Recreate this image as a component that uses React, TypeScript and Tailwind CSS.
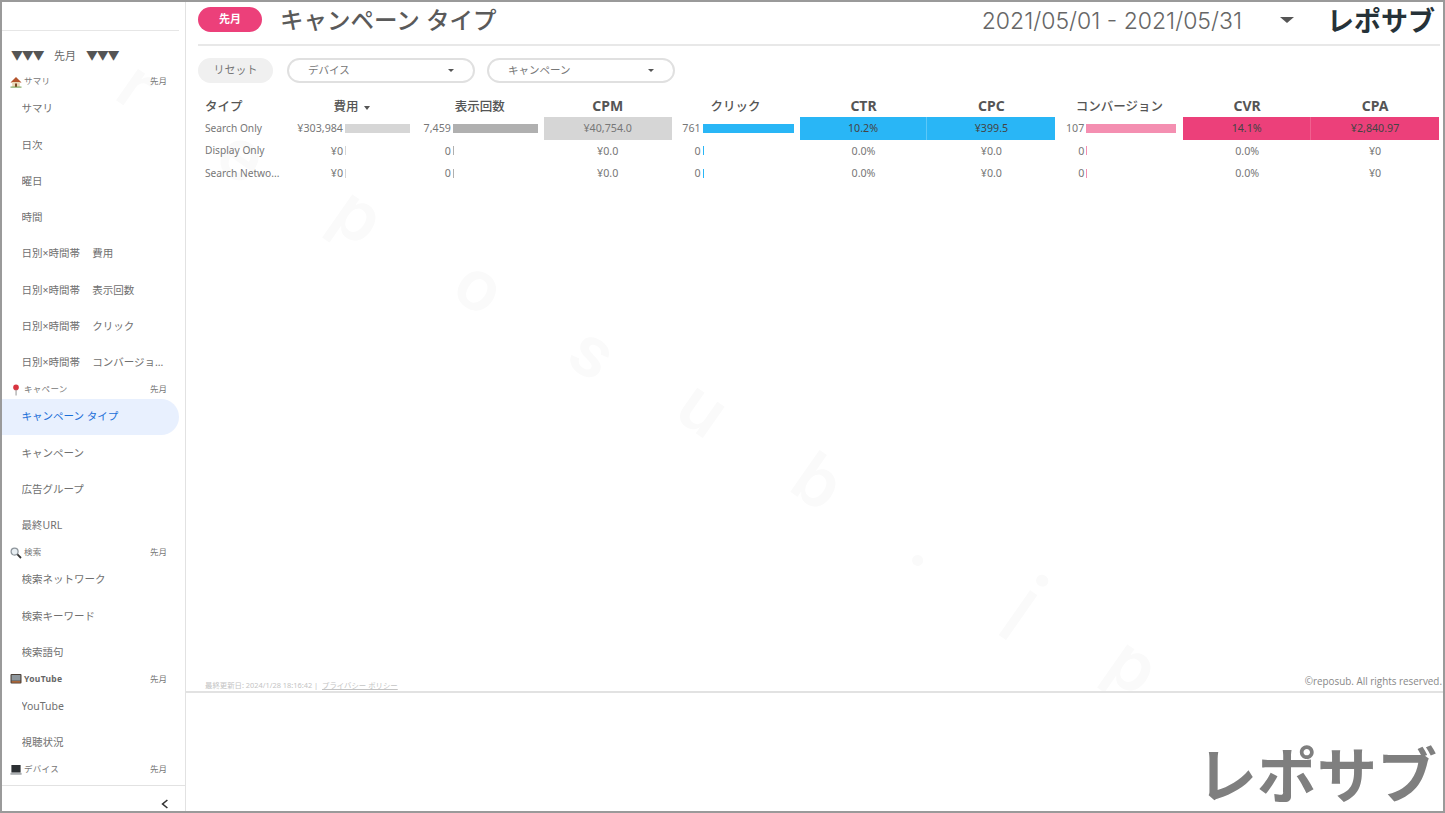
import type { ReactNode } from "react";

const jpFont = "font-['Noto_Sans','Noto_Sans_CJK_JP',sans-serif]";

const HouseIcon = () => (
  <svg viewBox="0 0 12 12" className="h-[12px] w-[12px] shrink-0">
    <path d="M6 1 L11.5 6.4 L0.5 6.4 Z" fill="#b4552d" />
    <rect x="2.2" y="6" width="7.6" height="5" fill="#ead9b8" />
    <rect x="5" y="7.5" width="2" height="3.5" fill="#7a4a28" />
    <rect x="0.5" y="10.6" width="11" height="1" fill="#6c9a4b" />
  </svg>
);

const PinIcon = () => (
  <svg viewBox="0 0 12 12" className="h-[12px] w-[12px] shrink-0">
    <circle cx="6" cy="3.4" r="2.8" fill="#d8343f" />
    <rect x="5.6" y="5.5" width="0.9" height="6" fill="#888" />
  </svg>
);

const SearchIcon = () => (
  <svg viewBox="0 0 12 12" className="h-[12px] w-[12px] shrink-0">
    <circle cx="4.6" cy="4.6" r="3.5" fill="#e8eef2" stroke="#8d959b" strokeWidth="1.2" />
    <path d="M7.4 7.4 L11 11" stroke="#333" strokeWidth="1.8" />
  </svg>
);

const TvIcon = () => (
  <svg viewBox="0 0 12 12" className="h-[12px] w-[12px] shrink-0">
    <rect x="0.5" y="1" width="11" height="9.5" rx="1" fill="#4b4038" />
    <rect x="1.6" y="2" width="8.8" height="5.6" fill="#8d969c" />
    <rect x="1.6" y="8.2" width="8.8" height="1.4" fill="#c0703a" />
  </svg>
);

const LaptopIcon = () => (
  <svg viewBox="0 0 12 12" className="h-[12px] w-[12px] shrink-0">
    <rect x="1.4" y="1" width="9.2" height="7.6" fill="#2b2f33" />
    <path d="M0.4 8.8 H11.6 V10.8 H0.4 Z" fill="#a9adb0" />
  </svg>
);

const Caret = ({ className }: { className: string }) => (
  <span className={`h-0 w-0 border-x-transparent border-t-[#555] ${className}`} />
);

const SectionHeader = ({ icon, label, bold }: { icon: ReactNode; label: string; bold?: boolean }) => (
  <div className="flex h-[18px] items-center pb-[1px] pl-[8px] pr-[18px]">
    {icon}
    <span className={`ml-[2px] flex-1 text-[8.5px] tracking-[0.3px] ${bold ? "font-bold text-[#666]" : "text-[#777]"}`}>{label}</span>
    <span className="text-[8.5px] text-[#777]">先月</span>
  </div>
);

const NavItem = ({ label, active }: { label: string; active?: boolean }) => (
  <div
    className={`flex h-[36.25px] items-center pl-[19.5px] text-[10.5px] ${
      active ? "mr-[6px] rounded-r-[18px] bg-[#e8f0fe] text-[#1a6fd8]" : "text-[#707070]"
    }`}
  >
    <span className="truncate pr-[21px]">{label}</span>
  </div>
);

const Sidebar = () => (
  <aside className="flex w-[184px] shrink-0 flex-col border-r border-[#e2e2e2]">
    <div className="mr-[6px] h-[29px] border-b border-[#e6e6e6]" />
    <div className="flex h-[42px] items-center pl-[9px] pt-[8px] text-[11px] text-[#666]">
      <span className="w-[32px] text-[12px] tracking-[-1.3px] text-[#555]">▼▼▼</span>
      <span className="ml-[11px] mr-[10px]">先月</span>
      <span className="text-[12px] tracking-[-1.3px] text-[#555]">▼▼▼</span>
    </div>
    <SectionHeader icon={<HouseIcon />} label="サマリ" />
    {[
      "サマリ",
      "日次",
      "曜日",
      "時間",
      "日別×時間帯　\u2009費用",
      "日別×時間帯　\u2009表示回数",
      "日別×時間帯　\u2009クリック",
      "日別×時間帯　\u2009コンバージョン",
    ].map((l) => (
      <NavItem key={l} label={l} />
    ))}
    <SectionHeader icon={<PinIcon />} label="キャペーン" />
    <NavItem label="キャンペーン タイプ" active />
    <NavItem label="キャンペーン" />
    <NavItem label="広告グループ" />
    <NavItem label="最終URL" />
    <SectionHeader icon={<SearchIcon />} label="検索" />
    <NavItem label="検索ネットワーク" />
    <NavItem label="検索キーワード" />
    <NavItem label="検索語句" />
    <SectionHeader icon={<TvIcon />} label="YouTube" bold />
    <NavItem label="YouTube" />
    <NavItem label="視聴状況" />
    <SectionHeader icon={<LaptopIcon />} label="デバイス" />
    <div className="mt-[6px] flex flex-1 items-end justify-end border-t border-[#e2e2e2] pb-[2px] pr-[16px]">
      <svg viewBox="0 0 10 12" className="h-[10px] w-[8px]" fill="none" stroke="#333" strokeWidth="2">
        <path d="M8 1 L2 6 L8 11" />
      </svg>
    </div>
  </aside>
);

const FilterSelect = ({ label }: { label: string }) => (
  <div className="flex h-[25px] w-[188px] items-center justify-between rounded-full border-[2px] border-[#e0e0e0] pl-[19px] pr-[19px] text-[10.5px] text-[#777]">
    <span>{label}</span>
    <Caret className="border-x-[3px] border-t-[3px]" />
  </div>
);

const headers = [
  { label: "費用", caret: true },
  { label: "表示回数" },
  { label: "CPM", bold: true },
  { label: "クリック" },
  { label: "CTR", bold: true },
  { label: "CPC", bold: true },
  { label: "コンバージョン" },
  { label: "CVR", bold: true },
  { label: "CPA", bold: true },
];

const BarCell = ({
  value,
  textWidth,
  barWidth,
  color,
}: {
  value: string;
  textWidth: string;
  barWidth: number;
  color: string;
}) => (
  <div className="flex h-full items-center">
    <span className={`${textWidth} shrink-0 text-right`}>{value}</span>
    <span className={`ml-[2px] h-[9px] ${color}`} style={{ width: barWidth || 1 }} />
  </div>
);

const ValueCell = ({ value, bg = "", dark }: { value: string; bg?: string; dark?: boolean }) => (
  <div className={`flex h-full items-center justify-center ${bg} ${dark ? "text-[#444]" : ""}`}>{value}</div>
);

const rows = [
  {
    name: "Search Only",
    cost: "¥303,984",
    imp: "7,459",
    cpm: "¥40,754.0",
    click: "761",
    ctr: "10.2%",
    cpc: "¥399.5",
    conv: "107",
    cvr: "14.1%",
    cpa: "¥2,840.97",
    full: true,
  },
  { name: "Display Only", cost: "¥0", imp: "0", cpm: "¥0.0", click: "0", ctr: "0.0%", cpc: "¥0.0", conv: "0", cvr: "0.0%", cpa: "¥0", full: false },
  { name: "Search Netwo...", cost: "¥0", imp: "0", cpm: "¥0.0", click: "0", ctr: "0.0%", cpc: "¥0.0", conv: "0", cvr: "0.0%", cpa: "¥0", full: false },
];

const gridCols = "grid grid-cols-[89px_repeat(9,127.9px)]";

const ReportTable = () => (
  <div className="ml-[13px] mt-[11px]">
    <div className={`${gridCols} h-[23px] items-center text-[12.5px] text-[#555]`}>
      <div className="pl-[6px] pt-[4px] font-medium">タイプ</div>
      {headers.map((h) => (
        <div key={h.label} className={`flex items-center justify-center ${h.bold ? "text-[14px] font-bold" : "pt-[4px] font-medium"}`}>
          {h.label}
          {h.caret && <Caret className="ml-[6px] border-x-[3.5px] border-t-[4px]" />}
        </div>
      ))}
    </div>
    {rows.map((r) => (
      <div key={r.name} className={`${gridCols} h-[22.5px] items-center text-[10.7px] text-[#777]`}>
        <div className="truncate pl-[6px] text-[10.2px]">{r.name}</div>
        <BarCell value={r.cost} textWidth="w-[55px]" barWidth={r.full ? 65 : 0} color="bg-[#d6d6d6]" />
        <BarCell value={r.imp} textWidth="w-[35px]" barWidth={r.full ? 85 : 0} color="bg-[#b0b0b0]" />
        <ValueCell value={r.cpm} bg={r.full ? "bg-[#d6d6d6]" : ""} />
        <BarCell value={r.click} textWidth="w-[29px]" barWidth={r.full ? 91 : 0} color="bg-[#29b6f6]" />
        <ValueCell value={r.ctr} bg={r.full ? "bg-[#29b6f6] border-r border-[#5cc8f8]" : ""} dark={r.full} />
        <ValueCell value={r.cpc} bg={r.full ? "bg-[#29b6f6]" : ""} dark={r.full} />
        <BarCell value={r.conv} textWidth="w-[29px]" barWidth={r.full ? 90 : 0} color="bg-[#f48fb1]" />
        <ValueCell value={r.cvr} bg={r.full ? "bg-[#ec407a] border-r border-[#f0608f]" : ""} dark={r.full} />
        <ValueCell value={r.cpa} bg={r.full ? "bg-[#ec407a]" : ""} dark={r.full} />
      </div>
    ))}
  </div>
);

const watermark = [
  { c: "r", cls: "left-[122px] top-[43px]" },
  { c: "e", cls: "left-[220px] top-[113px]" },
  { c: "p", cls: "left-[335px] top-[173px]" },
  { c: "o", cls: "left-[457px] top-[244px]" },
  { c: "s", cls: "left-[572px] top-[310px]" },
  { c: "u", cls: "left-[680px] top-[366px]" },
  { c: "b", cls: "left-[795px] top-[439px]" },
  { c: ".", cls: "left-[916px] top-[502px]" },
  { c: "i", cls: "left-[1009px] top-[566px] text-[100px] font-normal" },
  { c: "p", cls: "left-[1110px] top-[623px]" },
];

const Watermark = () => (
  <div className="pointer-events-none absolute left-0 top-0 h-[689px] w-full overflow-hidden font-['Inter',sans-serif] text-[70px] font-semibold leading-[80px] text-[#fafafa]">
    {watermark.map((w, i) => (
      <span key={i} className={`absolute rotate-[35deg] ${w.cls}`}>
        {w.c}
      </span>
    ))}
  </div>
);

export default function App() {
  return (
    <div className={`relative flex h-[813px] w-[1445px] overflow-hidden border-2 border-[#9a9a9a] bg-white ${jpFont}`}>
      <Watermark />
      <div className="relative flex w-full">
        <Sidebar />
        <main className="flex min-w-0 flex-1 flex-col">
          <header className="ml-[12px] mr-[3px] flex h-[44px] shrink-0 items-center border-b-2 border-[#e8e8e8] pb-[7px]">
            <div className="flex h-[25px] w-[64px] items-center justify-center rounded-full bg-[#ec407a] text-[11px] font-bold text-white">先月</div>
            <h1 className="ml-[18px] pt-[2px] text-[23.5px] font-medium text-[#5a5a5a]">キャンペーン タイプ</h1>
            <div className="flex-1" />
            <span className="pt-[4px] font-['Inter',sans-serif] text-[23px] font-light text-[#666]">2021/05/01 - 2021/05/31</span>
            <Caret className="ml-[38px] border-x-[7px] border-t-[6px]" />
            <span className="ml-[33px] mr-[5px] pt-[2px] text-[27px] font-bold leading-none text-[#263238]">レポサブ</span>
          </header>
          <div className="ml-[12px] mt-[12px] flex items-center">
            <div className="flex h-[25px] w-[75px] items-center justify-center rounded-full bg-[#f0f0f0] text-[11px] text-[#777]">リセット</div>
            <div className="ml-[14px]">
              <FilterSelect label="デバイス" />
            </div>
            <div className="ml-[12px]">
              <FilterSelect label="キャンペーン" />
            </div>
          </div>
          <ReportTable />
          <div className="flex-1" />
          <div className="flex h-[14px] items-end justify-between pb-[1px] pl-[19px] pr-[1px]">
            <div className="text-[7.4px] leading-[10px] text-[#c4c4c4]">
              最終更新日: 2024/1/28 18:16:42 |&nbsp;&nbsp;<span className="underline">プライバシー ポリシー</span>
            </div>
            <div className="mb-[3px] font-['Open_Sans',sans-serif] text-[9.9px] leading-[12px] text-[#888]">©reposub. All rights reserved.</div>
          </div>
          <div className="flex h-[120px] shrink-0 items-end justify-end border-t-2 border-[#e2e2e2] pb-[1px] pr-[6px]">
            <span className="text-[60px] font-bold leading-[70px] text-[#7f7f7f]">レポサブ</span>
          </div>
        </main>
      </div>
    </div>
  );
}
